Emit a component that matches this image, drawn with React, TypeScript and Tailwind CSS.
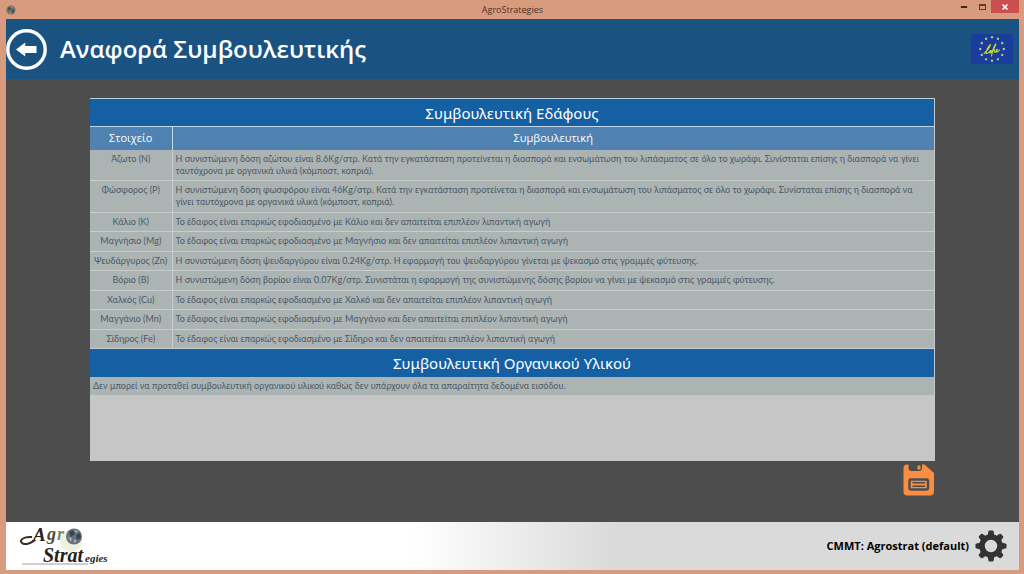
import { Minus, X } from "lucide-react";

type Advice = { element: string; text: string };

const soilAdvice: Advice[] = [
  {
    element: "Άζωτο (N)",
    text: "Η συνιστώμενη δόση αζώτου είναι 8.6Kg/στρ. Κατά την εγκατάσταση προτείνεται η διασπορά και ενσωμάτωση του λιπάσματος σε όλο το χωράφι. Συνίσταται επίσης η διασπορά να γίνει ταυτόχρονα με οργανικά υλικά (κόμποστ, κοπριά).",
  },
  {
    element: "Φώσφορος (P)",
    text: "Η συνιστώμενη δόση φωσφόρου είναι 46Kg/στρ. Κατά την εγκατάσταση προτείνεται η διασπορά και ενσωμάτωση του λιπάσματος σε όλο το χωράφι. Συνίσταται επίσης η διασπορά να γίνει ταυτόχρονα με οργανικά υλικά (κόμποστ, κοπριά).",
  },
  {
    element: "Κάλιο (K)",
    text: "Το έδαφος είναι επαρκώς εφοδιασμένο με Κάλιο και δεν απαιτείται επιπλέον λιπαντική αγωγή",
  },
  {
    element: "Μαγνήσιο (Mg)",
    text: "Το έδαφος είναι επαρκώς εφοδιασμένο με Μαγνήσιο και δεν απαιτείται επιπλέον λιπαντική αγωγή",
  },
  {
    element: "Ψευδάργυρος (Zn)",
    text: "Η συνιστώμενη δόση ψευδαργύρου είναι 0.24Kg/στρ. Η εφαρμογή του ψευδαργύρου γίνεται με ψεκασμό στις γραμμές φύτευσης.",
  },
  {
    element: "Βόριο (B)",
    text: "Η συνιστώμενη δόση βορίου είναι 0.07Kg/στρ. Συνιστάται η εφαρμογή της συνιστώμενης δόσης βορίου να γίνει με ψεκασμό στις γραμμές φύτευσης.",
  },
  {
    element: "Χαλκός (Cu)",
    text: "Το έδαφος είναι επαρκώς εφοδιασμένο με Χαλκό και δεν απαιτείται επιπλέον λιπαντική αγωγή",
  },
  {
    element: "Μαγγάνιο (Mn)",
    text: "Το έδαφος είναι επαρκώς εφοδιασμένο με Μαγγάνιο και δεν απαιτείται επιπλέον λιπαντική αγωγή",
  },
  {
    element: "Σίδηρος (Fe)",
    text: "Το έδαφος είναι επαρκώς εφοδιασμένο με Σίδηρο και δεν απαιτείται επιπλέον λιπαντική αγωγή",
  },
];

const spokes = [0, 30, 60, 90, 120, 150, 180, 210, 240, 270, 300, 330];
const teeth = [0, 45, 90, 135, 180, 225, 270, 315];

function AppIcon() {
  return (
    <svg className="w-[10px] h-[10px]" viewBox="0 0 10 10">
      <circle cx="5" cy="5" r="4.6" fill="#75706b" />
      <path d="M2 3l2-1 1 2-2 2zM6 5l2-1v3l-2 1z" fill="#3f4a50" />
      <path d="M5 1l2 1-1 1zM3 7l2 1-1 1z" fill="#a9a7a0" />
    </svg>
  );
}

function TitleBar() {
  return (
    <div className="h-[19px] grid grid-cols-[1fr_auto_1fr] items-center">
      <div>
        <AppIcon />
      </div>
      <h2 className="text-[9px] leading-[12px] text-[#4a3129]">AgroStrategies</h2>
      <div className="flex justify-end self-start h-[13px]">
        <button aria-label="Ελαχιστοποίηση" className="w-[18px] flex items-center justify-center text-[#3b251d]">
          <Minus className="w-[8px] h-[8px]" strokeWidth={6} />
        </button>
        <button aria-label="Μεγιστοποίηση" className="w-[18px] flex items-center justify-center">
          <span className="w-[7px] h-[6px] border border-t-2 border-[#5a3e33]" />
        </button>
        <button aria-label="Κλείσιμο" className="w-[28px] flex items-center justify-center bg-[#c9504f] text-white">
          <X className="w-[8px] h-[8px]" strokeWidth={5} />
        </button>
      </div>
    </div>
  );
}

function LifeLogo() {
  return (
    <svg className="w-[42px] h-[30px]" viewBox="0 0 42 30" role="img" aria-label="Life">
      <rect width="42" height="30" fill="#1b3c9c" />
      {spokes.map((a) => (
        <circle key={a} cx="21" cy="3.2" r="1.2" fill="#a3d173" transform={`rotate(${a} 21 15)`} />
      ))}
      <g fill="none" stroke="#cbd83a" strokeWidth="1.1" strokeLinecap="round" strokeLinejoin="round">
        <path d="M13 19.5C15.5 18 19 13 19.5 10.5C18 11 15.5 16 15 19.3C16.5 20 18 19 19.5 16.5L19 19C20.5 19 23 15 25 10C23 11 21.5 17 20.5 22" />
        <path d="M19.5 17.5C21.5 16 23 15.5 23.5 16C23 17.5 23 19 24.5 18C26 17 27 15.5 26 15.2C24.8 15.5 24.5 18.3 26 18C27 17.8 28 17 28.5 16" />
      </g>
    </svg>
  );
}

function Header() {
  return (
    <header className="h-[60px] bg-[#1a5282] flex items-center pr-[6px]">
      <button aria-label="Πίσω">
        <svg className="w-[41px] h-[41px]" viewBox="0 0 41 41">
          <circle cx="20.5" cy="20.5" r="18.7" fill="none" stroke="#fff" strokeWidth="3.4" />
          <path d="M10 20.5L19.2 13.5V17H30.5V24H19.2V27.5Z" fill="#fff" />
        </svg>
      </button>
      <h1 className="flex-1 ml-[13px] text-[24px] leading-[32px] font-semibold text-white">
        Αναφορά Συμβουλευτικής
      </h1>
      <LifeLogo />
    </header>
  );
}

function AgroLogo() {
  return (
    <svg className="w-[92px] h-[48px]" viewBox="0 -4 92 48" role="img" aria-label="AgroStrategies">
      <circle cx="51" cy="15" r="11" fill="#e4ecd2" opacity="0.7" />
      <path d="M2 38H68" stroke="#8c8088" strokeWidth="0.8" />
      <g fontFamily="Liberation Serif, serif" fontStyle="italic" fontWeight="bold">
        <text x="13" y="15" fontSize="19" fill="#2b211c">A</text>
        <text x="27" y="14" fontSize="18" fill="#4d4839">g</text>
        <text x="37" y="14" fontSize="18" fill="#7d8a5c">r</text>
        <text x="23" y="36" fontSize="20" fill="#26221f">Strat</text>
        <text x="65" y="36" fontSize="11" fill="#26221f">egies</text>
      </g>
      <path d="M15 14C12 16 10 17.500 7 18C3.500 18.500 0.500 17 1 14.500C2 12 7 10.500 12 11" fill="none" stroke="#3b2a22" strokeWidth="2" />
      <circle cx="54" cy="10.5" r="8" fill="#66727c" />
      <path d="M49 6l4-2 2 4-4 3zM56 9l4-2 1 5-4 2z" fill="#39444e" />
      <path d="M54 4l4 1-2 2zM48 11l4 1-1 4zM54 13l3 2-3 2z" fill="#a3aeb4" />
    </svg>
  );
}

function SaveIcon() {
  return (
    <svg className="w-[32px] h-[32px]" viewBox="0 0 32 32">
      <path
        d="M4 0.5H5.5V4C5.5 6 6.5 7 8.5 7H16C18 7 19 6 19 4V0.5H21.5L31 9V28C31 30 29.5 31.5 27.5 31.5H4C2 31.5 0.5 30 0.5 28V4C0.5 2 2 0.5 4 0.5Z"
        fill="#f98d42"
      />
      <rect x="14.5" y="1.5" width="3" height="4" rx="0.5" fill="#f98d42" />
      <rect x="6.5" y="15.5" width="18.5" height="10" rx="1.5" fill="#f98d42" stroke="#4d4d4d" strokeWidth="2.4" />
      <path d="M9.5 18.8H22M9.5 22.2H22" stroke="#4d4d4d" strokeWidth="1.6" />
    </svg>
  );
}

function GearIcon() {
  return (
    <svg className="w-[32px] h-[32px]" viewBox="0 0 32 32">
      <circle cx="16" cy="16" r="9" fill="none" stroke="#333" strokeWidth="5.6" />
      {teeth.map((a) => (
        <path key={a} d="M12.6 6L13.4 1.5Q13.6 0.5 14.6 0.5H17.4Q18.4 0.5 18.6 1.5L19.4 6Z" fill="#333" transform={`rotate(${a} 16 16)`} />
      ))}
    </svg>
  );
}

function SoilTable() {
  return (
    <table className="w-full h-[223px] border-collapse text-[9px] leading-[12px] text-[#4a5a68]">
      <caption className="h-[28px] bg-[#1460a2] border-t border-[#b9d0e2] font-['Noto_Sans',sans-serif] text-[15px] leading-[28px] text-white">
        Συμβουλευτική Εδάφους
      </caption>
      <thead>
        <tr className="h-[23px] bg-[#4f82b0] border-t border-[#c3d9ea] font-['Open_Sans',sans-serif] text-[11px] leading-[16px] text-white">
          <th scope="col" className="w-[82px] p-0 font-medium border-r border-[#c3d9ea]">
            Στοιχείο
          </th>
          <th scope="col" className="p-0 font-medium">
            Συμβουλευτική
          </th>
        </tr>
      </thead>
      <tbody>
        {soilAdvice.map((row) => (
          <tr key={row.element} className="bg-[#acb3b3] border-b border-[#c8cccc]">
            <th scope="row" className="py-[3px] px-0 align-top font-normal whitespace-nowrap border-r border-[#c8cccc]">
              {row.element}
            </th>
            <td className="py-[3px] pl-[3px] pr-[4px] align-top">{row.text}</td>
          </tr>
        ))}
      </tbody>
    </table>
  );
}

export default function App() {
  return (
    <div className="min-h-screen flex flex-col bg-[#d89b7d] pl-[6px] pr-[5px] pb-[4px] font-['Open_Sans','Noto_Sans',sans-serif]">
      <TitleBar />
      <Header />

      <main className="flex-1 bg-[#4d4d4d] px-21 pt-[19px]">
        <div className="bg-[#c6c6c6] min-h-[363px] border-r border-[#c6c6c6] font-['Lato','Noto_Sans',sans-serif]">
          <SoilTable />
          <section className="text-[9px] leading-[12px] text-[#4a5a68]">
            <h2 className="bg-[#1460a2] text-center font-['Noto_Sans',sans-serif] text-[15px] leading-[28px] text-white">
              Συμβουλευτική Οργανικού Υλικού
            </h2>
            <p className="bg-[#acb3b3] py-[3px] px-[3px]">
              Δεν μπορεί να προταθεί συμβουλευτική οργανικού υλικού καθώς δεν υπάρχουν όλα τα απαραίτητα δεδομένα εισόδου.
            </p>
          </section>
        </div>
        <div className="flex justify-end pt-[3px]">
          <button aria-label="Αποθήκευση">
            <SaveIcon />
          </button>
        </div>
      </main>

      {/* Status bar */}
      <footer className="h-[48px] flex items-center justify-between pl-[14px] pr-[12px] bg-linear-to-r from-white from-40% to-[#dadada] to-60%">
        <AgroLogo />
        <div className="flex items-center gap-[6px]">
          <span className="text-[11px] leading-[16px] font-bold text-black">CMMT: Agrostrat (default)</span>
          <button aria-label="Ρυθμίσεις">
            <GearIcon />
          </button>
        </div>
      </footer>
    </div>
  );
}
